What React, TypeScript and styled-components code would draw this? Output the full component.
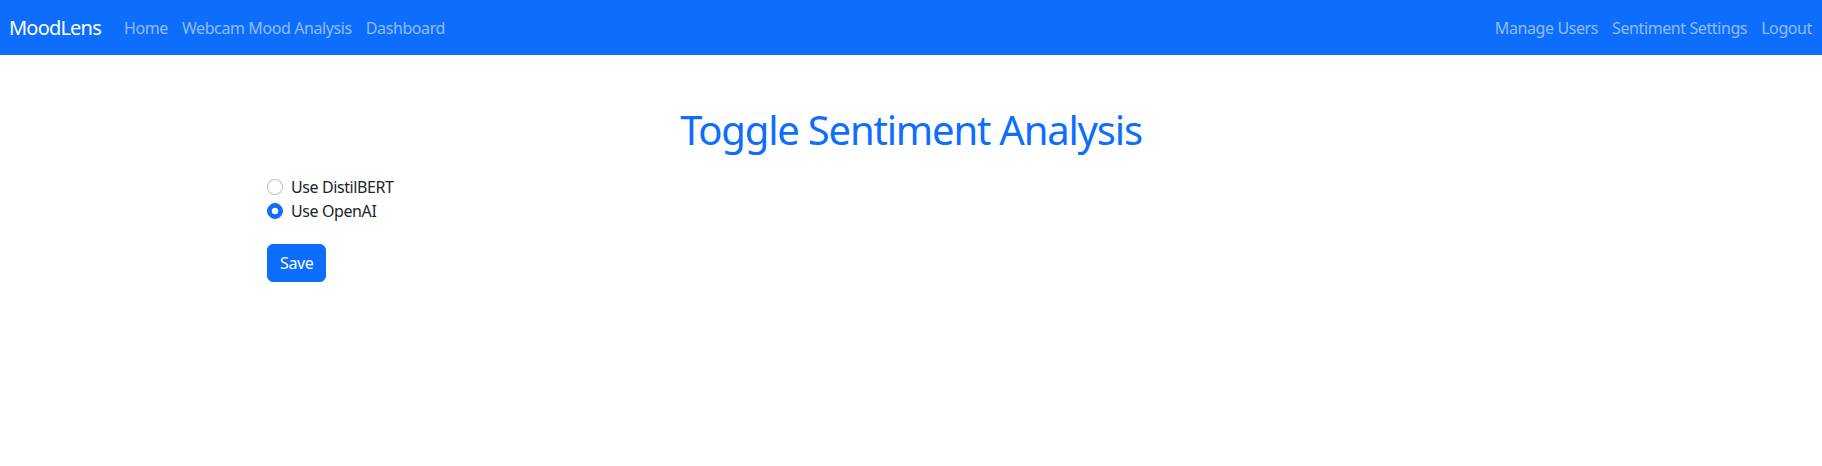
import React, { useState } from "react";
import styled, { createGlobalStyle } from "styled-components";

const Global = createGlobalStyle`
  * { box-sizing: border-box; }
  body {
    margin: 0;
    font-family: "Segoe UI", "Noto Sans", "Open Sans", sans-serif;
    font-size: 16px;
    line-height: 1.5;
    letter-spacing: -0.025em;
    color: #212529;
    background: #fff;
  }
`;

const Navbar = styled.nav`
  background: #0d6efd;
  height: 55px;
  display: flex;
  align-items: center;
  justify-content: space-between;
  padding: 0 10px 0 9px;
`;

const NavGroup = styled.div`
  display: flex;
  align-items: center;
`;

const Brand = styled.a`
  color: #fff;
  font-size: 20px;
  line-height: 30px;
  letter-spacing: -0.04em;
  margin-right: 16px;
  text-decoration: none;
`;

const NavLink = styled.a`
  color: rgba(255, 255, 255, 0.55);
  padding: 8px 7px;
  text-decoration: none;
  line-height: 24px;
  &:last-child { padding-right: 0; }
`;

const Container = styled.main`
  width: 1312px;
  margin: 51px auto 0;
  padding: 0 12px;
`;

const Title = styled.h1`
  margin: 0 0 21px;
  text-align: center;
  color: #0d6efd;
  font-size: 40px;
  font-weight: 400;
  line-height: 1.2;
  letter-spacing: -0.03em;
`;

const CheckRow = styled.label`
  display: flex;
  align-items: center;
  gap: 8px;
  height: 24px;
  cursor: pointer;
`;

const Radio = styled.input`
  appearance: none;
  margin: 0;
  width: 16px;
  height: 16px;
  border-radius: 50%;
  border: 1px solid rgba(0, 0, 0, 0.25);
  background: #fff;
  flex: none;
  &:checked {
    background: #0d6efd;
    border-color: #0d6efd;
    background-image: radial-gradient(circle, #fff 0 3.2px, transparent 3.6px);
  }
`;

const SaveButton = styled.button`
  margin-top: 21px;
  background: #0d6efd;
  border: 1px solid #0d6efd;
  color: #fff;
  font: inherit;
  letter-spacing: -0.025em;
  line-height: 24px;
  padding: 6px 12px;
  border-radius: 6px;
  cursor: pointer;
`;

export default function App() {
  const [mode, setMode] = useState("openai");
  return (
    <>
      <Global />
      <Navbar>
        <NavGroup>
          <Brand>MoodLens</Brand>
          <NavLink>Home</NavLink>
          <NavLink>Webcam Mood Analysis</NavLink>
          <NavLink>Dashboard</NavLink>
        </NavGroup>
        <NavGroup>
          <NavLink>Manage Users</NavLink>
          <NavLink>Sentiment Settings</NavLink>
          <NavLink>Logout</NavLink>
        </NavGroup>
      </Navbar>
      <Container>
        <Title>Toggle Sentiment Analysis</Title>
        <CheckRow>
          <Radio type="radio" name="m" checked={mode === "distil"} onChange={() => setMode("distil")} />
          Use DistilBERT
        </CheckRow>
        <CheckRow>
          <Radio type="radio" name="m" checked={mode === "openai"} onChange={() => setMode("openai")} />
          Use OpenAI
        </CheckRow>
        <SaveButton>Save</SaveButton>
      </Container>
    </>
  );
}
